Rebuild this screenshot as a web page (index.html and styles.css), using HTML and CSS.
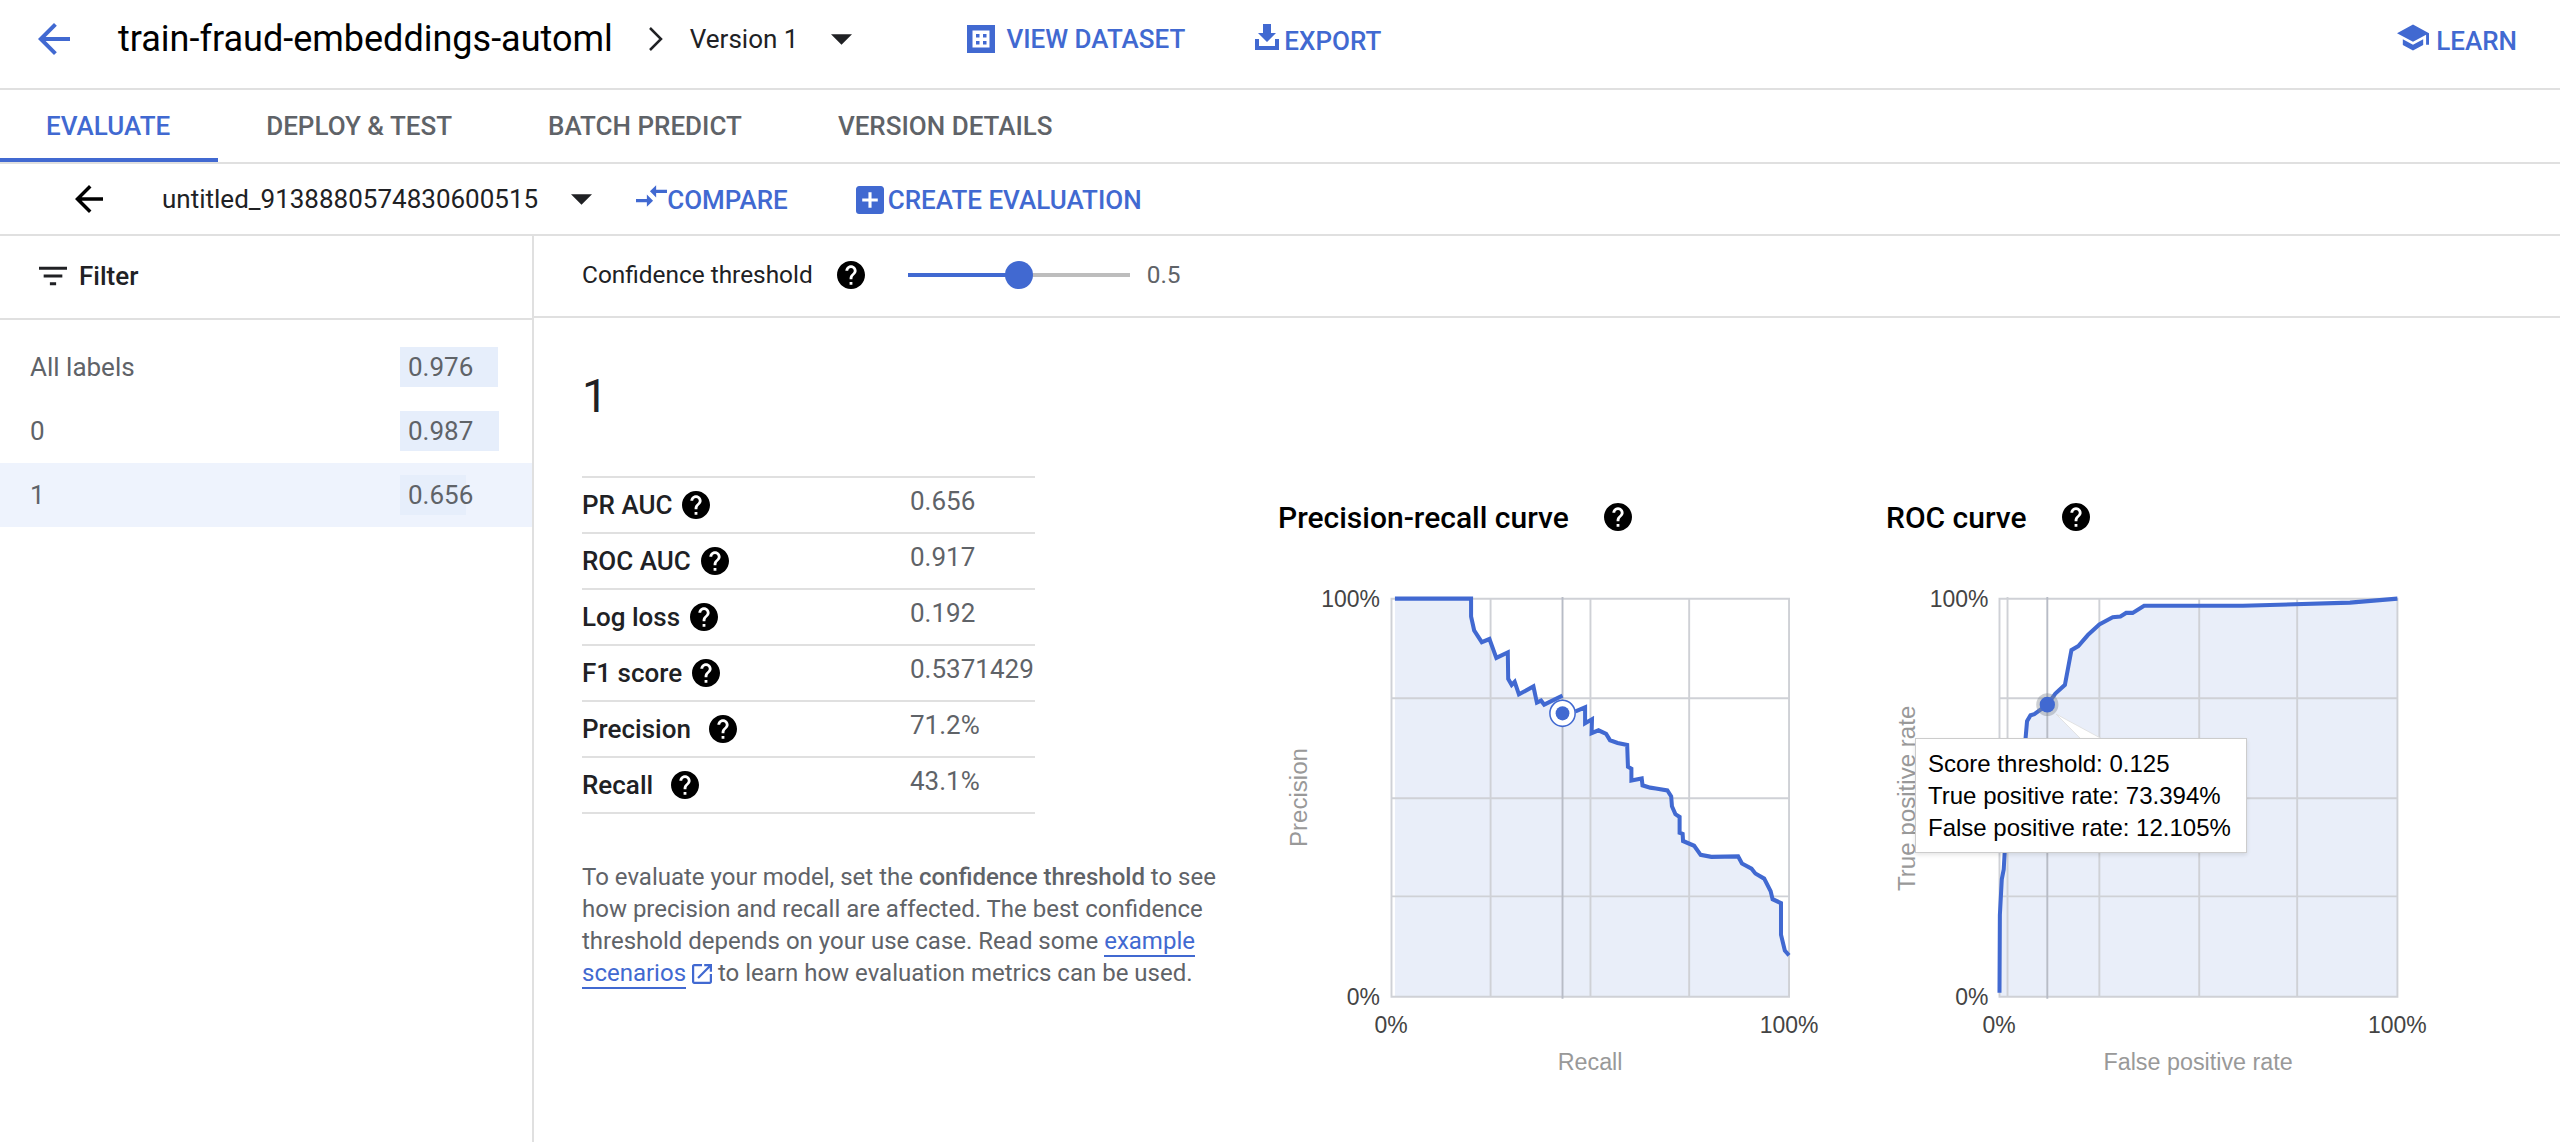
FILE: index.html
```html
<!DOCTYPE html>
<html lang="en">
<head>
  <meta charset="UTF-8">
  <title>train-fraud-embeddings-automl - Evaluate</title>
  <link rel="stylesheet" href="styles.css">
</head>
<body>
  <svg class="sprite" aria-hidden="true">
    <symbol id="help" viewBox="2 2 20 20"><path d="M12 2C6.48 2 2 6.48 2 12s4.48 10 10 10 10-4.48 10-10S17.52 2 12 2zm1 17h-2v-2h2v2zm2.07-7.75l-.9.92C13.45 12.9 13 13.5 13 15h-2v-.5c0-1.1.45-2.1 1.17-2.83l1.24-1.26c.37-.36.59-.86.59-1.41 0-1.1-.9-2-2-2s-2 .9-2 2H8c0-2.21 1.79-4 4-4s4 1.79 4 4c0 .88-.36 1.68-.93 2.25z"/></symbol>
    <symbol id="back" viewBox="4 4 16 16"><path d="M20 11H7.83l5.59-5.59L12 4l-8 8 8 8 1.41-1.41L7.83 13H20v-2z"/></symbol>
    <symbol id="drop" viewBox="7 10 10 5"><path d="M7 10l5 5 5-5z"/></symbol>
  </svg>

  <div class="topbar">
    <svg class="icon-back"><use href="#back"/></svg>
    <div class="title">train-fraud-embeddings-automl</div>
    <svg class="chevron" viewBox="0 0 15 24"><polyline points="2,1 13,12 2,23"/></svg>
    <div class="version">Version 1</div>
    <svg class="drop"><use href="#drop"/></svg>
    <a class="btn btn-dataset">
      <svg class="btn-icon" viewBox="0 0 28 28"><path fill-rule="evenodd" d="M0 0h28v28H0zM5.500 5.500v17h17v-17zM9 9h3.500v3.500H9zM16 9h3.500v3.500H16zM9 16h3.500v3.500H9zM16 16h3.500v3.500H16z"/></svg>
      VIEW DATASET
    </a>
    <a class="btn btn-export">
      <svg class="btn-icon-export" viewBox="0 0 24 26"><path d="M8 0h8v9h5l-9 9-9-9h5zM0 15h4v7h16v-7h4v11H0z"/></svg>
      EXPORT
    </a>
    <a class="btn btn-learn">
      <svg class="btn-icon-learn" viewBox="1 3 22 18"><path d="M5 13.180v4L12 21l7-3.820v-4L12 17l-7-3.820zM12 3L1 9l11 6 9-4.910V17h2V9L12 3z"/></svg>
      LEARN
    </a>
  </div>

  <div class="tabs">
    <div class="tab active">EVALUATE</div>
    <div class="tab">DEPLOY &amp; TEST</div>
    <div class="tab">BATCH PREDICT</div>
    <div class="tab">VERSION DETAILS</div>
  </div>

  <div class="toolbar">
    <svg class="icon-back-small"><use href="#back"/></svg>
    <div class="eval-name">untitled_9138880574830600515</div>
    <svg class="drop drop-eval"><use href="#drop"/></svg>
    <a class="btn btn-compare">
      <svg class="btn-icon-compare" viewBox="2 5 20 14"><path d="M9.010 14H2v2h7.010v3L13 15l-3.990-4v3zm5.980-1v-3H22V8h-7.010V5L11 9l3.990 4z"/></svg>
      COMPARE
    </a>
    <a class="btn btn-create">
      <svg class="btn-icon-create" viewBox="3 3 18 18"><path d="M19 3H5c-1.110 0-2 .9-2 2v14c0 1.100.89 2 2 2h14c1.100 0 2-.9 2-2V5c0-1.100-.9-2-2-2zm-2 10h-4v4h-2v-4H7v-2h4V7h2v4h4v2z"/></svg>
      CREATE EVALUATION
    </a>
  </div>

  <div class="main">
    <div class="sidebar">
      <div class="filter">
        <svg class="filter-icon" viewBox="3 6 18 12"><path d="M10 18h4v-2h-4v2zM3 6v2h18V6H3zm3 7h12v-2H6v2z"/></svg>
        Filter
      </div>
      <div class="labels">
        <div class="label-row">
          <span>All labels</span>
          <div class="score"><div class="score-bar" style="width: 98px"></div><span class="score-value">0.976</span></div>
        </div>
        <div class="label-row">
          <span>0</span>
          <div class="score"><div class="score-bar" style="width: 99px"></div><span class="score-value">0.987</span></div>
        </div>
        <div class="label-row selected">
          <span>1</span>
          <div class="score"><div class="score-bar" style="width: 66px"></div><span class="score-value">0.656</span></div>
        </div>
      </div>
    </div>

    <div class="content">
      <div class="threshold">
        <span class="threshold-label">Confidence threshold</span>
        <svg class="help"><use href="#help"/></svg>
        <div class="slider">
          <div class="slider-fill"></div>
          <div class="slider-thumb"></div>
        </div>
        <span class="slider-value">0.5</span>
      </div>

      <div class="details">
        <div class="metrics">
          <h1 class="label-title">1</h1>
          <table class="metric-table">
            <tr><td class="metric-cell"><span class="metric-name">PR AUC<svg class="help"><use href="#help"/></svg></span></td><td class="metric-value">0.656</td></tr>
            <tr><td class="metric-cell"><span class="metric-name">ROC AUC<svg class="help"><use href="#help"/></svg></span></td><td class="metric-value">0.917</td></tr>
            <tr><td class="metric-cell"><span class="metric-name">Log loss<svg class="help"><use href="#help"/></svg></span></td><td class="metric-value">0.192</td></tr>
            <tr><td class="metric-cell"><span class="metric-name">F1 score<svg class="help"><use href="#help"/></svg></span></td><td class="metric-value">0.5371429</td></tr>
            <tr><td class="metric-cell"><span class="metric-name wide">Precision<svg class="help"><use href="#help"/></svg></span></td><td class="metric-value">71.2%</td></tr>
            <tr><td class="metric-cell"><span class="metric-name wide">Recall<svg class="help"><use href="#help"/></svg></span></td><td class="metric-value">43.1%</td></tr>
          </table>
          <p class="hint">
            To evaluate your model, set the <b>confidence threshold</b> to see
            how precision and recall are affected. The best confidence
            threshold depends on your use case. Read some <a class="link">example
            scenarios</a><svg class="open-icon" viewBox="3 3 18 18"><path d="M19 19H5V5h7V3H5c-1.110 0-2 .9-2 2v14c0 1.100.9 2 2 2h14c1.100 0 2-.9 2-2v-7h-2v7zM14 3v2h3.590l-9.830 9.830 1.410 1.410L19 6.410V10h2V3h-7z"/></svg> to learn how evaluation metrics can be used.
          </p>
        </div>

        <div class="chart-panel">
          <div class="chart-title">Precision-recall curve<svg class="help"><use href="#help"/></svg></div>
          <div class="chart-box">
            <svg class="chart" viewBox="50 230 1542 1338" preserveAspectRatio="none">
              <polygon class="area" points="353,300 552,300 552,345 560,380 580,410 600,402 618,450 648,436 649,503 658,518 666,510 677,542 715,522 724,563 735,558 743,568 791,545 791,590 825,585 850,575 850,615 868,605 867,640 885,633 905,642 915,658 935,665 960,670 962,725 971,730 971,760 998,755 1000,772 1020,778 1035,780 1065,785 1075,800 1077,825 1086,845 1097,852 1097,892 1105,895 1106,913 1135,925 1152,948 1180,953 1250,952 1260,970 1285,983 1295,995 1318,1008 1335,1040 1340,1060 1362,1070 1362,1150 1372,1190 1383,1202 1383,1307 353,1307"/>
              <path class="grid" d="M344 300H1383V1307H344ZM344 552H1383M344 805H1383M344 1053H1383M603 300V1307M864 300V1307M1122 300V1307"/>
              <path class="grid-dark" d="M791 296V1312"/>
              <polyline class="curve" points="353,300 552,300 552,345 560,380 580,410 600,402 618,450 648,436 649,503 658,518 666,510 677,542 715,522 724,563 735,558 743,568 791,545"/>
              <polyline class="curve" points="825,585 850,575 850,615 868,605 867,640 885,633 905,642 915,658 935,665 960,670 962,725 971,730 971,760 998,755 1000,772 1020,778 1035,780 1065,785 1075,800 1077,825 1086,845 1097,852 1097,892 1105,895 1106,913 1135,925 1152,948 1180,953 1250,952 1260,970 1285,983 1295,995 1318,1008 1335,1040 1340,1060 1362,1070 1362,1150 1372,1190 1383,1202"/>
              <circle class="marker-ring" cx="791" cy="590" r="33"/>
              <circle class="marker" cx="791" cy="590" r="18"/>
              <text class="tick" x="314" y="322" text-anchor="end">100%</text>
              <text class="tick" x="314" y="1328" text-anchor="end">0%</text>
              <text class="tick" x="343" y="1398" text-anchor="middle">0%</text>
              <text class="tick" x="1383" y="1398" text-anchor="middle">100%</text>
              <text class="axis-title" x="863" y="1491" text-anchor="middle">Recall</text>
              <text class="axis-title" transform="translate(122 803) rotate(-90)" text-anchor="middle">Precision</text>
            </svg>
          </div>
        </div>

        <div class="chart-panel">
          <div class="chart-title">ROC curve<svg class="help"><use href="#help"/></svg></div>
          <div class="chart-box">
            <svg class="chart" viewBox="70 230 1542 1338" preserveAspectRatio="none">
              <polygon class="area" points="364,1297 365,1100 370,1010 375,985 380,900 400,780 420,700 432,655 436,610 445,595 455,592 489,568 510,540 535,518 552,430 570,420 595,392 625,365 660,347 680,345 695,336 712,336 742,318 1000,318 1280,310 1404,300 1404,1307 364,1307"/>
              <path class="grid" d="M364 300H1404V1307H364ZM364 552H1404M364 805H1404M364 1053H1404M385 296V1307M625 300V1307M886 300V1307M1142 300V1307"/>
              <path class="grid-dark" d="M489 296V1312"/>
              <polyline class="curve" points="364,1297 365,1100 370,1010 375,985 380,900 400,780 420,700 432,655 436,610 445,595 455,592 489,568 510,540 535,518 552,430 570,420 595,392 625,365 660,347 680,345 695,336 712,336 742,318 1000,318 1280,310 1404,300"/>
              <circle class="marker-halo" cx="489" cy="568" r="29"/>
              <circle class="marker" cx="489" cy="568" r="20"/>
              <text class="tick" x="335" y="322" text-anchor="end">100%</text>
              <text class="tick" x="335" y="1328" text-anchor="end">0%</text>
              <text class="tick" x="363" y="1398" text-anchor="middle">0%</text>
              <text class="tick" x="1404" y="1398" text-anchor="middle">100%</text>
              <text class="axis-title" x="883" y="1491" text-anchor="middle">False positive rate</text>
              <text class="axis-title" transform="translate(143 805) rotate(-90)" text-anchor="middle">True positive rate</text>
              <polygon class="tooltip-tail" points="512,592 582,660 642,660"/>
            </svg>
            <div class="tooltip">
              <div>Score threshold: 0.125</div>
              <div>True positive rate: 73.394%</div>
              <div>False positive rate: 12.105%</div>
            </div>
          </div>
        </div>
      </div>
    </div>
  </div>
</body>
</html>
```

FILE: styles.css
```css
/* Evaluate page */
html, body {
  height: 100%;
}
body {
  margin: 0;
  display: flex;
  flex-direction: column;
  font-family: Roboto, "Liberation Sans", sans-serif;
  background-color: #fff;
  color: #202124;
  overflow: hidden;
}
.sprite {
  display: none;
}
.btn {
  display: flex;
  align-items: center;
  color: #4169d1;
  font-size: 26px;
  font-weight: 500;
  fill: #4169d1;
}

/* Top bar */
.topbar {
  display: flex;
  align-items: center;
  flex-shrink: 0;
  box-sizing: border-box;
  height: 90px;
  padding: 0 43px 10px 38px;
  border-bottom: 2px solid #e0e0e0;
}
.icon-back {
  width: 32px;
  height: 32px;
  fill: #4169d1;
}
.title {
  margin-left: 48px;
  font-size: 36px;
  color: #000;
}
.chevron {
  width: 15px;
  height: 24px;
  margin-left: 35px;
  fill: none;
  stroke: #202124;
  stroke-width: 2.500;
}
.version {
  margin-left: 27px;
  font-size: 26px;
  color: #202124;
}
.drop {
  width: 21px;
  height: 11px;
  margin-left: 33px;
  fill: #202124;
}
.btn-dataset {
  margin-left: 115px;
}
.btn-icon {
  width: 28px;
  height: 28px;
  margin-right: 11px;
}
.btn-export {
  margin-left: 70px;
  padding-top: 4px;
}
.btn-icon-export {
  width: 24px;
  height: 26px;
  margin: -8px 5px 0 0;
}
.btn-learn {
  margin-left: auto;
  padding-top: 4px;
}
.btn-icon-learn {
  width: 32px;
  height: 27px;
  margin: -8px 7px 0 0;
}

/* Tabs */
.tabs {
  display: flex;
  flex-shrink: 0;
  height: 72px;
  border-bottom: 2px solid #e0e0e0;
}
.tab {
  display: flex;
  align-items: center;
  padding: 0 48px;
  font-size: 26px;
  font-weight: 500;
  color: #5f6368;
}
.tab.active {
  color: #4169d1;
  padding: 0 48px 0 46px;
  box-shadow: inset 0 -4px 0 #4169d1;
}

/* Evaluation toolbar */
.toolbar {
  display: flex;
  align-items: center;
  flex-shrink: 0;
  height: 70px;
  padding-left: 75px;
  border-bottom: 2px solid #e0e0e0;
}
.icon-back-small {
  width: 28px;
  height: 28px;
  fill: #000;
}
.eval-name {
  margin-left: 59px;
  font-size: 26px;
  color: #202124;
}
.drop-eval {
  margin-left: 33px;
}
.btn-compare {
  margin-left: 44px;
  padding-top: 2px;
}
.btn-icon-compare {
  width: 31px;
  height: 22px;
  margin: -8px 0 0 0;
}
.btn-create {
  margin-left: 68px;
  padding-top: 2px;
}
.btn-icon-create {
  width: 28px;
  height: 28px;
  margin-right: 4px;
}

/* Main area */
.main {
  display: flex;
  flex: 1;
  min-height: 0;
}
.sidebar {
  flex-shrink: 0;
  width: 532px;
  border-right: 2px solid #e0e0e0;
}
.filter {
  display: flex;
  align-items: center;
  box-sizing: border-box;
  height: 84px;
  padding: 0 0 3px 39px;
  border-bottom: 2px solid #e0e0e0;
  font-size: 26px;
  font-weight: 500;
  color: #202124;
}
.filter-icon {
  width: 28px;
  height: 20px;
  margin-right: 12px;
  fill: #202124;
}
.labels {
  padding-top: 15px;
}
.label-row {
  display: flex;
  align-items: center;
  justify-content: space-between;
  height: 64px;
  padding-left: 30px;
  font-size: 26px;
  color: #5f6368;
}
.label-row.selected {
  background-color: #eef3fd;
}
.score {
  position: relative;
  display: flex;
  align-items: center;
  width: 132px;
  height: 40px;
}
.score-bar {
  height: 100%;
  background-color: #e6eefb;
}
.score-value {
  position: absolute;
  left: 8px;
  top: 5px;
}

/* Threshold row */
.content {
  flex: 1;
  min-width: 0;
}
.threshold {
  display: flex;
  align-items: center;
  box-sizing: border-box;
  height: 82px;
  padding: 0 0 3px 48px;
  border-bottom: 2px solid #e0e0e0;
}
.threshold-label {
  font-size: 24.400px;
  color: #202124;
}
.help {
  flex-shrink: 0;
  width: 28px;
  height: 28px;
  margin-left: 24px;
  fill: #000;
}
.slider {
  position: relative;
  width: 222px;
  height: 4px;
  margin-left: 43px;
  background-color: #bdbdbd;
}
.slider-fill {
  width: 111px;
  height: 100%;
  background-color: #4169d1;
}
.slider-thumb {
  position: absolute;
  left: 97px;
  top: -12px;
  width: 28px;
  height: 28px;
  border-radius: 50%;
  background-color: #4169d1;
}
.slider-value {
  margin-left: 17px;
  font-size: 24.400px;
  color: #5f6368;
}

/* Details */
.details {
  display: flex;
  padding-left: 48px;
}
.metrics {
  flex-shrink: 0;
  width: 640px;
}
.label-title {
  margin: 48px 0 0;
  height: 110px;
  font-size: 46px;
  font-weight: 400;
  line-height: 60px;
  color: #202124;
}
.metric-table {
  width: 453px;
  border-collapse: collapse;
  border-top: 2px solid #e0e0e0;
}
.metric-table td {
  padding: 0;
  border-bottom: 2px solid #e0e0e0;
}
.metric-cell {
  height: 54px;
}
.metric-name {
  display: flex;
  align-items: center;
  font-size: 26px;
  font-weight: 500;
  color: #202124;
}
.metric-name .help {
  margin-left: 10px;
}
.metric-name.wide .help {
  margin-left: 18px;
}
.metric-table .metric-value {
  width: 125px;
  padding-bottom: 9px;
  font-size: 26px;
  color: #5f6368;
}
.hint {
  margin: 47px 0 0;
  width: 640px;
  font-size: 24px;
  line-height: 32px;
  color: #5f6368;
}
.hint b {
  font-weight: 500;
}
.link {
  color: #4169d1;
  border-bottom: 2px solid #4169d1;
}
.open-icon {
  width: 20px;
  height: 20px;
  margin-left: 6px;
  vertical-align: -3px;
  fill: #4169d1;
}

/* Charts */
.chart-panel {
  flex-shrink: 0;
  width: 590px;
  margin-left: 57px;
}
.chart-panel + .chart-panel {
  margin-left: 18px;
}
.chart-title {
  display: flex;
  align-items: center;
  height: 36px;
  margin: 181px 0 0 -1px;
  font-size: 30px;
  font-weight: 500;
  color: #000;
}
.chart-title .help {
  margin-left: 35px;
}
.chart-box {
  position: relative;
  margin-top: 36px;
}
.chart {
  display: block;
  width: 590px;
  height: 529px;
}
.area {
  fill: #e9eef9;
}
.grid {
  fill: none;
  stroke: #cfd1d6;
  stroke-width: 5;
}
.grid-dark {
  stroke: #b8bcc6;
  stroke-width: 5;
}
.curve {
  fill: none;
  stroke: #4169d1;
  stroke-width: 10.500;
}
.marker {
  fill: #4169d1;
}
.marker-ring {
  fill: #fff;
  stroke: #4169d1;
  stroke-width: 4;
}
.marker-halo {
  fill: #808890;
  opacity: 0.4;
}
.tick {
  font-family: "Liberation Sans", sans-serif;
  font-size: 60px;
  fill: #444;
}
.axis-title {
  font-family: "Liberation Sans", sans-serif;
  font-size: 61px;
  fill: #999;
}
.tooltip-tail {
  fill: #fff;
  stroke: #dcdcdc;
  stroke-width: 2;
}
.tooltip {
  position: absolute;
  left: 28px;
  top: 167px;
  box-sizing: border-box;
  width: 332px;
  height: 115px;
  padding: 9px 0 0 12px;
  background-color: #fff;
  border: 1px solid #ccc;
  box-shadow: 0 2px 4px rgba(0, 0, 0, 0.1);
  font-family: "Liberation Sans", sans-serif;
  font-size: 24px;
  line-height: 32px;
  color: #000;
}
```
